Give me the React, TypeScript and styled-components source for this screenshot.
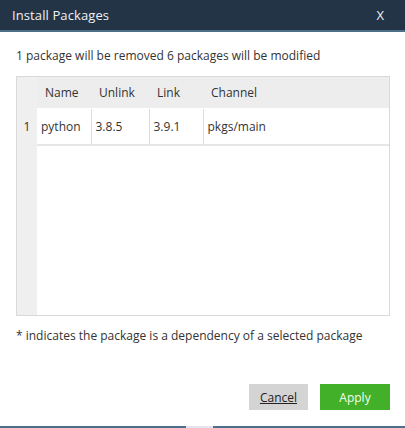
import * as React from 'react';
import styled, { createGlobalStyle } from 'styled-components';

type Pkg = {
  name: string;
  unlink: string;
  link: string;
  channel: string;
};

const packages: Pkg[] = [
  { name: 'python', unlink: '3.8.5', link: '3.9.1', channel: 'pkgs/main' },
];

const GlobalStyle = createGlobalStyle`
  html, body {
    margin: 0;
    padding: 0;
    background: #ffffff;
  }
  body {
    font-family: 'Open Sans', 'Noto Sans', 'DejaVu Sans', sans-serif;
    font-size: 12px;
    color: #333333;
  }
`;

const App: React.FC = () => {
  return (
    <>
      <GlobalStyle />
      <Dialog>
        <TitleBar>
          <Title>Install Packages</Title>
          <Close>X</Close>
        </TitleBar>
        <Body>
          <Summary>1 package will be removed 6 packages will be modified</Summary>
          <TableBox>
            <Table>
              <colgroup>
                <col style={{ width: 20 }} />
                <col style={{ width: 54 }} />
                <col style={{ width: 58 }} />
                <col style={{ width: 54 }} />
                <col />
              </colgroup>
              <thead>
                <tr>
                  <IndexHead />
                  <Head>Name</Head>
                  <Head>Unlink</Head>
                  <Head>Link</Head>
                  <Head>Channel</Head>
                </tr>
              </thead>
              <tbody>
                {packages.map((p, i) => (
                  <tr key={p.name}>
                    <IndexCell>{i + 1}</IndexCell>
                    <Cell>{p.name}</Cell>
                    <Cell>{p.unlink}</Cell>
                    <Cell>{p.link}</Cell>
                    <Cell $last>{p.channel}</Cell>
                  </tr>
                ))}
              </tbody>
            </Table>
          </TableBox>
          <Note>
            <Star>*</Star> indicates the package is a dependency of a selected package
          </Note>
          <Actions>
            <CancelButton>Cancel</CancelButton>
            <ApplyButton>Apply</ApplyButton>
          </Actions>
        </Body>
        <BottomEdge>
          <Grip />
        </BottomEdge>
      </Dialog>
    </>
  );
};

export default App;

const Dialog = styled.div`
  width: 405px;
  height: 428px;
  display: flex;
  flex-direction: column;
  background: #ffffff;
`;

const TitleBar = styled.div`
  height: 30px;
  flex: none;
  display: flex;
  align-items: center;
  justify-content: space-between;
  padding: 0 21px 0 12px;
  background: #243447;
  border-bottom: 2px solid #4d7088;
`;

const Title = styled.span`
  color: #eef1f4;
  font-size: 13px;
  letter-spacing: 0.1px;
`;

const Close = styled.span`
  color: #eef1f4;
  font-size: 13px;
`;

const Body = styled.div`
  flex: 1;
  display: flex;
  flex-direction: column;
  padding: 16px 15px 0 16px;
`;

const Summary = styled.div`
  font-size: 12px;
  color: #333333;
  line-height: 16px;
  height: 16px;
`;

const TableBox = styled.div`
  margin-top: 12px;
  width: 374px;
  height: 240px;
  box-sizing: border-box;
  border: 1px solid #d9d9d9;
  background: linear-gradient(to right, #efefef 20px, #ffffff 20px);
  overflow: hidden;
`;

const Table = styled.table`
  width: 100%;
  border-collapse: collapse;
  table-layout: fixed;
`;

const IndexHead = styled.th`
  height: 30px;
  padding: 0;
  background: #efefef;
`;

const Head = styled.th`
  height: 30px;
  padding: 0 0 1px 8px;
  background: #ededed;
  font-weight: normal;
  text-align: left;
  font-size: 12px;
  color: #333333;
  border-bottom: 1px solid #ffffff;
`;

const IndexCell = styled.td`
  padding: 0;
  background: #efefef;
  text-align: center;
  color: #333333;
  font-size: 12px;
  vertical-align: middle;
`;

const Cell = styled.td<{ $last?: boolean }>`
  height: 35px;
  padding: 0 0 0 4px;
  font-size: 12px;
  color: #333333;
  background: #ffffff;
  border-right: ${(p) => (p.$last ? 'none' : '1px solid #dcdcdc')};
  border-bottom: 2px solid #e6e6e6;
  white-space: nowrap;
`;

const Note = styled.div`
  margin-top: 12px;
  font-size: 12px;
  color: #333333;
  line-height: 16px;
`;

const Star = styled.span`
  color: #333333;
`;

const Actions = styled.div`
  margin-top: auto;
  margin-bottom: 16px;
  display: flex;
  justify-content: flex-end;
  gap: 12px;
`;

const BaseButton = styled.button`
  height: 26px;
  border: none;
  font-family: 'Open Sans', 'Noto Sans', 'DejaVu Sans', sans-serif;
  font-size: 12px;
  padding: 0;
  cursor: pointer;
`;

const CancelButton = styled(BaseButton)`
  width: 59px;
  background: #d4d4d4;
  color: #222222;
  text-decoration: underline;
`;

const ApplyButton = styled(BaseButton)`
  width: 70px;
  background: #43b02a;
  color: #f2fff0;
`;

const BottomEdge = styled.div`
  height: 2px;
  flex: none;
  background: #4d7088;
  display: flex;
  justify-content: center;
`;

const Grip = styled.div`
  width: 27px;
  height: 2px;
  margin-right: 6px;
  background: #e2e6ea;
`;
